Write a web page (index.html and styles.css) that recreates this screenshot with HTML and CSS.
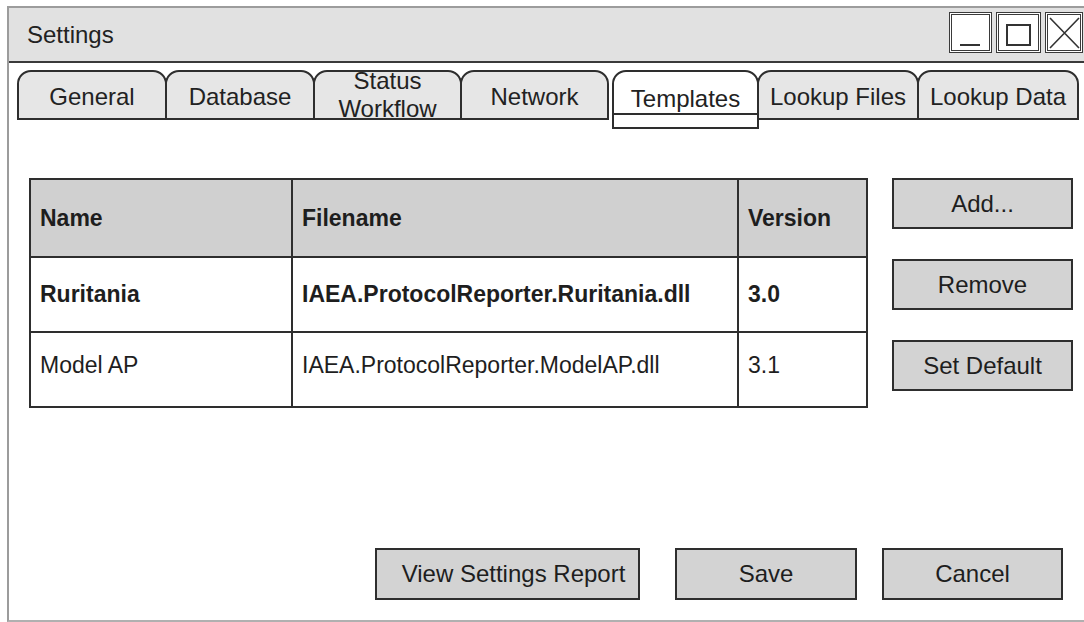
FILE: index.html
```html
<!DOCTYPE html>
<html lang="en">
<head>
<meta charset="utf-8">
<title>Settings</title>
<link rel="stylesheet" href="styles.css">
</head>
<body>
<div class="window">
  <header class="titlebar">
    <span class="title">Settings</span>
    <div class="controls">
      <span class="ctl ctl-min">
        <svg viewBox="0 0 37 35" width="37" height="35"><line x1="8" y1="30" x2="28" y2="30" stroke="#333" stroke-width="2"/></svg>
      </span>
      <span class="ctl ctl-max">
        <svg viewBox="0 0 39 35" width="39" height="35"><rect x="8" y="10" width="23" height="20" fill="none" stroke="#333" stroke-width="2"/></svg>
      </span>
      <span class="ctl ctl-close">
        <svg viewBox="0 0 32 35" width="32" height="35"><path d="M2 3 L31 33 M31 3 L2 33" stroke="#333" stroke-width="1.6" fill="none"/></svg>
      </span>
    </div>
  </header>

  <nav class="tabs">
    <div class="tab tab-general">General</div>
    <div class="tab tab-database">Database</div>
    <div class="tab tab-status"><span class="tab-two-line">Status<br>Workflow</span></div>
    <div class="tab tab-network">Network</div>
    <div class="tab tab-active"><span class="tab-label">Templates</span><span class="tab-lip"></span></div>
    <div class="tab tab-lookup">Lookup Files</div>
    <div class="tab tab-lookup">Lookup Data</div>
  </nav>

  <main class="panel">
    <table class="grid">
      <colgroup>
        <col class="col-name">
        <col class="col-file">
        <col class="col-version">
      </colgroup>
      <thead>
        <tr class="row-head">
          <th>Name</th>
          <th>Filename</th>
          <th>Version</th>
        </tr>
      </thead>
      <tbody>
        <tr class="row row-default">
          <td>Ruritania</td>
          <td>IAEA.ProtocolReporter.Ruritania.dll</td>
          <td>3.0</td>
        </tr>
        <tr class="row row-last">
          <td>Model AP</td>
          <td>IAEA.ProtocolReporter.ModelAP.dll</td>
          <td>3.1</td>
        </tr>
      </tbody>
    </table>

    <div class="side-actions">
      <button class="btn btn-side">Add...</button>
      <button class="btn btn-side">Remove</button>
      <button class="btn btn-side">Set Default</button>
    </div>
  </main>

  <footer class="footer">
    <button class="btn btn-report">View Settings Report</button>
    <button class="btn btn-save">Save</button>
    <button class="btn btn-cancel">Cancel</button>
  </footer>
</div>
</body>
</html>
```

FILE: styles.css
```css
* {
  box-sizing: border-box;
}

html,
body {
  margin: 0;
  background: #ffffff;
}

body {
  font-family: "Liberation Sans", Arial, sans-serif;
  color: #1e1e1e;
}

/* Dialog frame */
.window {
  margin: 6px 0 0 7px;
  width: 1077px;
  height: 616px;
  border-top: 2px solid #9c9c9c;
  border-left: 2px solid #9c9c9c;
  border-bottom: 2px solid #b0b0b0;
  display: flex;
  flex-direction: column;
}

/* Title bar */
.titlebar {
  height: 55px;
  background: #e1e1e1;
  border-bottom: 2px solid #3a3a3a;
  display: flex;
  align-items: center;
  justify-content: space-between;
  padding: 0 1px 0 18px;
}

.title {
  font-size: 24px;
  color: #222222;
}

.controls {
  align-self: flex-start;
  margin-top: 4px;
  display: flex;
  gap: 4px;
}

.ctl {
  height: 41px;
  background: #ffffff;
  border: 3px double #3a3a3a;
  display: block;
}

.ctl svg {
  display: block;
}

.ctl-min {
  width: 43px;
}

.ctl-max {
  width: 45px;
}

.ctl-close {
  width: 38px;
}

/* Tab strip */
.tabs {
  display: flex;
  align-items: flex-start;
  padding: 7px 0 0 8px;
}

.tab {
  height: 50px;
  border: 2px solid #2e2e2e;
  border-radius: 14px 14px 0 0;
  background: #e6e6e6;
  margin-right: -2px;
  display: flex;
  align-items: center;
  justify-content: center;
  padding-top: 4px;
  font-size: 24px;
  white-space: nowrap;
  color: #222222;
}

.tab-general,
.tab-database {
  width: 150px;
}

.tab-status,
.tab-network {
  width: 149px;
}

.tab-two-line {
  line-height: 28px;
  text-align: center;
  margin-top: -5px;
}

.tab-active {
  width: 147px;
  height: 59px;
  margin-left: 5px;
  background: #ffffff;
  padding: 0;
  flex-direction: column;
  align-items: stretch;
}

.tab-label {
  flex: 1;
  display: flex;
  align-items: center;
  justify-content: center;
  padding-top: 12px;
}

.tab-lip {
  height: 14px;
  border-top: 2px solid #2e2e2e;
}

.tab-lookup {
  width: 162px;
}

/* Templates list and its actions */
.panel {
  display: flex;
  align-items: flex-start;
  gap: 24px;
  margin-top: 49px;
  padding-left: 20px;
}

.grid {
  width: 839px;
  table-layout: fixed;
  border-collapse: separate;
  border-spacing: 0;
  border-top: 2px solid #2e2e2e;
  border-left: 2px solid #2e2e2e;
}

.col-name {
  width: 262px;
}

.col-file {
  width: 446px;
}

.col-version {
  width: 129px;
}

.grid th,
.grid td {
  border-right: 2px solid #2e2e2e;
  border-bottom: 2px solid #2e2e2e;
  padding: 0 9px;
  text-align: left;
  white-space: nowrap;
  font-size: 23px;
  color: #1e1e1e;
}

.grid th {
  background: #d0d0d0;
  font-weight: bold;
}

.row-head {
  height: 78px;
}

.row {
  height: 75px;
}

.row-default td {
  font-weight: bold;
}

.row-last td {
  padding-bottom: 8px;
}

.side-actions {
  width: 181px;
  display: flex;
  flex-direction: column;
  gap: 30px;
}

.btn {
  font-family: "Liberation Sans", Arial, sans-serif;
  font-size: 24px;
  color: #1e1e1e;
  background: #d3d3d3;
  border: 2px solid #2e2e2e;
  border-radius: 0;
  padding: 0;
  margin: 0;
}

.btn-side {
  height: 51px;
  width: 100%;
}

/* Dialog buttons */
.footer {
  margin-top: auto;
  display: flex;
  justify-content: flex-end;
  gap: 25px;
  padding: 0 21px 20px 0;
}

.footer .btn {
  height: 52px;
}

.btn-report {
  width: 265px;
  margin-right: 10px;
  padding-left: 12px;
}

.btn-save {
  width: 182px;
}

.btn-cancel {
  width: 181px;
}
```
